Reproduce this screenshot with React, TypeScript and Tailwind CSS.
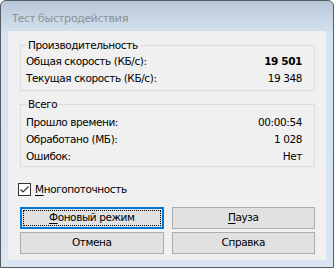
const perf = [
  { label: "Общая скорость (КБ/с):", value: "19 501", bold: true },
  { label: "Текущая скорость (КБ/с):", value: "19 348", bold: false },
];

const total = [
  { label: "Прошло времени:", value: "00:00:54" },
  { label: "Обработано (МБ):", value: "1 028" },
  { label: "Ошибок:", value: "Нет" },
];

function Row({ label, value, bold }: { label: string; value: string; bold?: boolean }) {
  return (
    <div className="flex h-[17px] items-center justify-between">
      <span>{label}</span>
      <span className={bold ? "font-bold" : ""}>{value}</span>
    </div>
  );
}

function Group({ title, className, children }: { title: string; className?: string; children: React.ReactNode }) {
  return (
    <fieldset className={"border border-[#dcdcdc] pl-[5px] pr-[12px] " + (className ?? "")}>
      <legend className="px-[2px] leading-[14px]">{title}</legend>
      {children}
    </fieldset>
  );
}

function Button({ children, focused }: { children: React.ReactNode; focused?: boolean }) {
  if (focused) {
    return (
      <button className="h-[22px] border-2 border-[#0078d7] bg-[#e1e1e1] p-[1px]">
        <div className="flex h-full items-center justify-center border border-dotted border-black">
          {children}
        </div>
      </button>
    );
  }
  return (
    <button className="flex h-[22px] items-center justify-center border border-[#adadad] bg-[#e1e1e1]">
      {children}
    </button>
  );
}

export default function App() {
  return (
    <div className="h-[268px] w-[334px] overflow-hidden rounded-t-[6px] border border-[#555b61] bg-[linear-gradient(180deg,#b8c7d8_0px,#d6e3f1_34px,#d9e5f2_100%)] font-['DejaVu_Sans',sans-serif] text-[10.5px] tracking-[-0.4px] text-black">
      <div className="flex h-[30px] items-center pl-[11px] pt-[4px] font-['Noto_Sans',sans-serif] text-[11.5px] tracking-[-0.1px] text-[#8e9296]">
        Тест быстродействия
      </div>
      <div className="mx-[7px] flex h-[229px] flex-col bg-[#f0f0f0] pl-[12px] pr-[11px]">
        <Group title="Производительность" className="mt-[7px] pb-[3px] pt-[1px]">
          {perf.map((r) => (
            <Row key={r.label} {...r} />
          ))}
        </Group>
        <Group title="Всего" className="mt-[6px] pb-[1px] pt-[3px]">
          {total.map((r) => (
            <Row key={r.label} {...r} />
          ))}
        </Group>
        <label className="mt-[15px] ml-[-2px] flex items-center gap-[4px]">
          <svg width="13" height="13" viewBox="0 0 13 13">
            <rect x="0.5" y="0.5" width="12" height="12" fill="#fff" stroke="#333" />
            <path d="M2.5 6.5 L5 9 L10.5 3.5" fill="none" stroke="#333" strokeWidth="1.2" />
          </svg>
          <span>
            <span className="underline underline-offset-2">М</span>ногопоточность
          </span>
        </label>
        <div className="mt-[9px] grid grid-cols-2 gap-x-[8px] gap-y-[3px]">
          <Button focused>
            <span>
              <span className="underline underline-offset-2">Ф</span>оновый режим
            </span>
          </Button>
          <Button>
            <span>
              <span className="underline underline-offset-2">П</span>ауза
            </span>
          </Button>
          <Button>Отмена</Button>
          <Button>Справка</Button>
        </div>
      </div>
    </div>
  );
}
